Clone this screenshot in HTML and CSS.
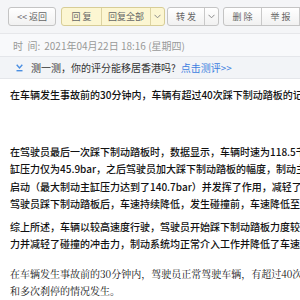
FILE: index.html
```html
<!DOCTYPE html>
<html lang="zh-CN">
<head>
  <meta charset="UTF-8">
  <title>邮件详情</title>
  <link rel="stylesheet" href="styles.css">
</head>
<body>
  <div class="toolbar">
    <a class="btn back">&lt;&lt; 返回</a>
    <div class="group yellow">
      <a class="seg w40">回 复</a>
      <a class="seg w49">回复全部</a>
      <a class="seg arrow"><svg width="7" height="5" viewBox="0 0 7 5"><path d="M0.5 0.8 L3.5 3.8 L6.5 0.8" fill="none" stroke="#8a8a8a" stroke-width="1"/></svg></a>
    </div>
    <div class="group">
      <a class="seg w37">转 发</a>
      <a class="seg arrow"><svg width="7" height="5" viewBox="0 0 7 5"><path d="M0.5 0.8 L3.5 3.8 L6.5 0.8" fill="none" stroke="#8a8a8a" stroke-width="1"/></svg></a>
    </div>
    <div class="group">
      <a class="seg w38">删 除</a>
      <a class="seg w38">举 报</a>
      <a class="seg w38">拒 收</a>
    </div>
  </div>

  <div class="meta">
    <span class="label">时&nbsp;&nbsp;间:</span>
    <span>2021年04月22日 18:16 (星期四)</span>
  </div>

  <div class="notice">
    <svg class="notice-icon" width="7" height="8" viewBox="0 0 7 8">
      <path d="M0.7 0.8 L3.5 4 L6.3 0.8" fill="none" stroke="#4b8fe2" stroke-width="1.4"/>
      <rect x="0.5" y="6" width="6" height="1.4" fill="#4b8fe2"/>
    </svg>
    <span>测一测，你的评分能移居香港吗?</span>
    <a class="notice-link">点击测评&gt;&gt;</a>
  </div>

  <div class="content">
    <p class="p-first">在车辆发生事故前的30分钟内，车辆有超过40次踩下制动踏板的记录，其中有多次刹停的情况发生。</p>
    <p class="p-data">在驾驶员最后一次踩下制动踏板时，数据显示，车辆时速为118.5千米/小时；在驾驶员踩下制动踏板后的前2.76秒，制动主<br>缸压力仅为45.9bar，之后驾驶员加大踩下制动踏板的幅度，制动主缸压力上升，随后前向碰撞预警及自动紧急制动功能<br>启动（最大制动主缸压力达到了140.7bar）并发挥了作用，减轻了碰撞的冲击力。<br>驾驶员踩下制动踏板后，车速持续降低，发生碰撞前，车速降低至48.5千米/小时。</p>
    <p class="p-sum">综上所述，车辆以较高速度行驶，驾驶员开始踩下制动踏板力度较轻，随后加大踩下制动踏板的<br>力并减轻了碰撞的冲击力，制动系统均正常介入工作并降低了车速。</p>
    <p class="p-serif">在车辆发生事故前的30分钟内，驾驶员正常驾驶车辆，有超过40次踩下制动踏板的记录，<br>和多次刹停的情况发生。</p>
  </div>
</body>
</html>
```

FILE: styles.css
```css
body {
  margin: 0;
  width: 300px;
  height: 300px;
  overflow: hidden;
  background: #fff;
  font-family: "Noto Sans CJK SC", sans-serif;
  color: #222;
}
.toolbar {
  display: flex;
  align-items: center;
  height: 33px;
  padding: 0 0 0 8px;
  background: #f4f5f7;
  border-bottom: 1px solid #e6e7ea;
  white-space: nowrap;
}
.btn, .seg {
  display: flex;
  align-items: center;
  justify-content: center;
  height: 17px;
  font-size: 9px;
  color: #666;
  flex: none;
}
.btn {
  width: 46px;
  border: 1px solid #c4c4c4;
  border-radius: 3px;
  background: linear-gradient(#fff, #f1f1f1);
}
.group {
  display: flex;
  flex: none;
  margin-left: 4px;
  border: 1px solid #c4c4c4;
  border-radius: 3px;
  background: linear-gradient(#fff, #f1f1f1);
}
.group.yellow {
  margin-left: 5px;
  border-color: #d7cd97;
  background: #fcf6d2;
}
.seg + .seg {
  border-left: 1px solid #c9c9c9;
}
.yellow .seg + .seg {
  border-left-color: #dcd3a2;
}
.w37 { width: 36px; }
.w38 { width: 37px; }
.w40 { width: 39px; }
.w49 { width: 48px; }
.arrow { width: 13px; }
.group.yellow + .group {
  margin-left: 2px;
}
.meta {
  height: 22px;
  display: flex;
  align-items: center;
  padding-left: 13px;
  font-size: 10px;
  color: #999;
  background: #f8f9fb;
}
.meta .label {
  margin-right: 4px;
}
.notice {
  display: flex;
  align-items: center;
  height: 21px;
  padding-left: 16px;
  font-size: 10px;
  color: #333;
  background: #f2f4f7;
  border-top: 1px solid #e4e6ea;
  border-bottom: 1px solid #e4e6ea;
  white-space: nowrap;
}
.notice-icon {
  margin-right: 8px;
}
.notice-link {
  margin-left: 5px;
  color: #3d7fe0;
}
.content {
  padding: 0 0 0 10px;
  width: 600px;
  font-size: 10px;
  font-weight: 500;
  line-height: 17.5px;
  color: #111;
  white-space: nowrap;
}
.content p {
  margin: 0;
}
.p-first {
  margin-top: 7px !important;
}
.p-data {
  margin-top: 39px !important;
}
.p-sum {
  margin-top: 5px !important;
}
.p-serif {
  margin-top: 12px !important;
  font-weight: normal;
  font-family: "Noto Serif CJK SC", "Liberation Serif", serif;
}
```
